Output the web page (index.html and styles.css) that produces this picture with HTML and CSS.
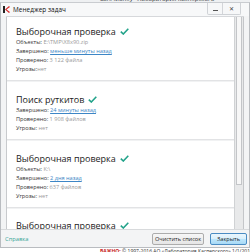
FILE: index.html
```html
<!DOCTYPE html>
<html>
<head>
<meta charset="utf-8">
<link rel="stylesheet" href="styles.css">
</head>
<body>
<div class="desk-top"><span>Safe Money · Лаборатория Касперского</span></div>
<div class="window">
  <div class="titlebar">
    <svg class="app-icon" width="7" height="7" viewBox="0 0 7 7"><rect x="0" y="0" width="2" height="7" fill="#222"/><path d="M2 3.5 L6 0 L7 1 L3.5 3.5 L7 6 L6 7 Z" fill="#d62828"/></svg>
    <span class="title">Менеджер задач</span>
    <div class="caption-btns">
      <span class="cb min"></span>
      <span class="cb close">✕</span>
    </div>
  </div>
  <div class="body">
    <div class="list">
      <div class="section first">
        <div class="head">Выборочная проверка <svg class="check" width="9" height="7" viewBox="0 0 9 7"><path d="M0.8 3.6 L3.3 6 L8.3 0.8" fill="none" stroke="#22a38a" stroke-width="1.6"/></svg></div>
        <div class="row"><span class="lbl">Объекты:</span> <span class="val">E:\TMP\X8x90.zip</span></div>
        <div class="row"><span class="lbl">Завершено:</span> <a class="link">меньше минуты назад</a></div>
        <div class="row"><span class="lbl">Проверено:</span> <span class="val">3 122 файла</span></div>
        <div class="row"><span class="lbl">Угрозы:</span><span class="val">нет</span></div>
      </div>
      <div class="section">
        <div class="head">Поиск руткитов <svg class="check" width="9" height="7" viewBox="0 0 9 7"><path d="M0.8 3.6 L3.3 6 L8.3 0.8" fill="none" stroke="#22a38a" stroke-width="1.6"/></svg></div>
        <div class="row"><span class="lbl">Завершено:</span> <a class="link">24 минуты назад</a></div>
        <div class="row"><span class="lbl">Проверено:</span> <span class="val">1 908 файлов</span></div>
        <div class="row"><span class="lbl">Угрозы:</span> <span class="val">нет</span></div>
      </div>
      <div class="section">
        <div class="head">Выборочная проверка <svg class="check" width="9" height="7" viewBox="0 0 9 7"><path d="M0.8 3.6 L3.3 6 L8.3 0.8" fill="none" stroke="#22a38a" stroke-width="1.6"/></svg></div>
        <div class="row"><span class="lbl">Объекты:</span> <span class="val">K:\</span></div>
        <div class="row"><span class="lbl">Завершено:</span> <a class="link">2 дня назад</a></div>
        <div class="row"><span class="lbl">Проверено:</span> <span class="val">637 файлов</span></div>
        <div class="row"><span class="lbl">Угрозы:</span> <span class="val">нет</span></div>
      </div>
      <div class="section last">
        <div class="head">Выборочная проверка <svg class="check" width="9" height="7" viewBox="0 0 9 7"><path d="M0.8 3.6 L3.3 6 L8.3 0.8" fill="none" stroke="#22a38a" stroke-width="1.6"/></svg></div>
      </div>
    </div>
    <div class="scrollbar"><div class="thumb"></div></div>
  </div>
  <div class="footer">
    <a class="help">Справка</a>
    <div class="buttons">
      <span class="btn">Очистить список</span>
      <span class="btn default">Закрыть</span>
    </div>
  </div>
</div>
<div class="desk-bottom"><span class="red">ВАЖНО:</span> © 1997-2016 АО «Лаборатория Касперского» 1/1/2016</div>
</body>
</html>
```
FILE: styles.css
```css
html, body {
  margin: 0;
  padding: 0;
}
body {
  width: 250px;
  height: 252px;
  overflow: hidden;
  background: #e9ecef;
  font-family: "Open Sans", "Liberation Sans", sans-serif;
}
.desk-top {
  height: 2px;
  overflow: hidden;
  background: #eef0f2;
  font-size: 6px;
  line-height: 6px;
  color: #333;
  padding-left: 100px;
}
.desk-top span {
  display: block;
  margin-top: -4px;
}
.window {
  height: 246px;
  box-sizing: border-box;
  border: 1px solid #b9bcc0;
  border-top-color: #c9ccd0;
  background: #f3f4f5;
  display: flex;
  flex-direction: column;
}
.titlebar {
  height: 13px;
  display: flex;
  align-items: center;
  padding-left: 2px;
  background: #f7f8f9;
}
.app-icon {
  flex: none;
}
.title {
  margin-left: 3px;
  font-size: 6.4px;
  color: #111;
  letter-spacing: 0.05px;
}
.caption-btns {
  margin-left: auto;
  margin-right: 8px;
  align-self: flex-start;
  display: flex;
  height: 11px;
  border: 1px solid #cfd2d6;
  border-top: none;
  border-radius: 0 0 2px 2px;
  background: #f6f7f8;
}
.cb {
  width: 14px;
  display: flex;
  align-items: center;
  justify-content: center;
  font-size: 6px;
  color: #444;
}
.cb.min {
  border-right: 1px solid #d3d5d9;
}
.cb.min::after {
  content: "";
  width: 5px;
  height: 1px;
  background: #555;
  margin-top: 3px;
}
.cb.close {
  width: 17px;
}
.body {
  flex: 1;
  display: flex;
  margin-left: 5px;
  margin-right: 5px;
  min-height: 0;
  border-top: 1px solid #d6d8db;
}
.list {
  flex: 1;
  background: #fff;
  border-left: 1px solid #c8cacd;
  overflow: hidden;
}
.section {
  padding: 12px 0 6px 9px;
  border-bottom: 1px solid #e2e3e5;
  box-shadow: 0 1px 0 #f1f2f3;
  margin-bottom: 1px;
}
.section.first {
  padding-top: 9px;
}
.section.last {
  padding-top: 12px;
  padding-bottom: 0;
  border-bottom: none;
  box-shadow: none;
  margin-bottom: 0;
}
.head {
  font-size: 9px;
  line-height: 12px;
  color: #222;
  display: flex;
  align-items: center;
}
.section.last .head {
  line-height: 10px;
}
.check {
  margin-left: 4px;
  margin-top: -2px;
}
.row {
  font-size: 5.6px;
  line-height: 9px;
  white-space: nowrap;
}
.lbl {
  color: #333;
}
.val {
  color: #9a9a9a;
}
.link {
  color: #3d86c6;
  text-decoration: underline;
}
.scrollbar {
  width: 8px;
  background: #e8e9ea;
  border-left: 1px solid #d0d2d4;
  border-right: 1px solid #c4c6c9;
}
.thumb {
  height: 168px;
  margin: 0 1px;
  background: #f7f7f7;
  border: 1px solid #c3c5c8;
  border-top: none;
  box-sizing: border-box;
}
.footer {
  height: 17px;
  flex: none;
  display: flex;
  align-items: center;
  padding: 0 2px 0 4px;
  border-top: 1px solid #d8dadc;
}
.help {
  font-size: 5.8px;
  color: #3aa597;
}
.buttons {
  margin-left: auto;
  display: flex;
  gap: 6px;
}
.btn {
  height: 12px;
  box-sizing: border-box;
  border: 1px solid #acacac;
  border-radius: 2px;
  background: linear-gradient(#f7f7f7, #e5e5e5);
  font-size: 5.6px;
  color: #222;
  display: flex;
  align-items: center;
  justify-content: center;
  width: 52px;
}
.btn.default {
  width: 37px;
  border-color: #4a8cc3;
  background: linear-gradient(#eaf6fd 0%, #d9f0fc 50%, #bee6fd 51%, #a7d9f5 100%);
}
.desk-bottom {
  height: 4px;
  overflow: hidden;
  background: #fff;
  font-size: 5px;
  line-height: 6px;
  color: #333;
  padding-left: 100px;
  white-space: nowrap;
}
.red {
  color: #c62020;
  font-weight: bold;
}
```
